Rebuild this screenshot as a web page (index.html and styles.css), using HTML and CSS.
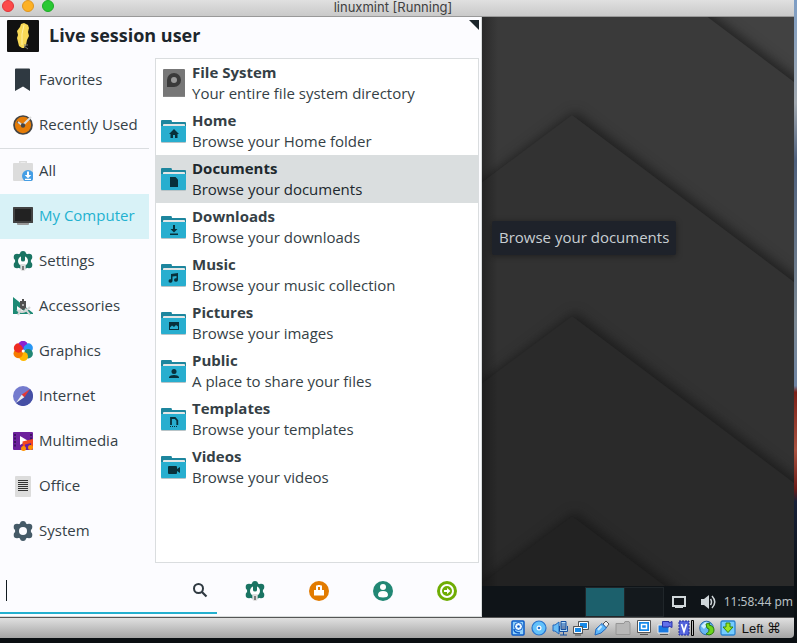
FILE: index.html
```html
<!DOCTYPE html>
<html lang="en">
<head>
<meta charset="utf-8">
<title>linuxmint [Running]</title>
<link rel="stylesheet" href="styles.css">
</head>
<body>
<svg class="defs" aria-hidden="true">
  <symbol id="folder" viewBox="0 0 25 23">
    <path fill="#b9c4c7" d="M0 21h25v1q0 1-1 1H1q-1 0-1-1z"/>
    <path fill="#1d869e" d="M1 0h9q1 0 1 2h13q1 0 1 1v6H0V1q0-1 1-1z"/>
    <path fill="#e4e6e6" d="M3 4h20q1 0 1 1v3H2V5q0-1 1-1z"/>
    <path fill="#28aecf" d="M0 6h25v15q0 1-1 1H1q-1 0-1-1z"/>
  </symbol>
  <symbol id="settings" viewBox="0 0 20 20">
    <g fill="#1a7463"><circle cx="10" cy="10" r="8"/><circle cx="10" cy="3" r="3"/><circle cx="4" cy="6" r="3.300"/><circle cx="16" cy="6" r="3.300"/><circle cx="4" cy="14" r="3.300"/><circle cx="16" cy="14" r="3.300"/></g>
    <circle cx="10" cy="10" r="5" fill="#fff"/>
    <path fill="#1a7463" d="M8 3h4v6q0 1.500-2 1.500T8 9z"/>
    <path fill="#dedede" d="M7.300 13h5.400v5q0 2-2.700 2t-2.700-2z"/>
    <path fill="#666" d="M9.200 15h1.600v4H9.200z"/>
  </symbol>
</svg>

<main class="window">
  <header class="titlebar">
    <div class="lights">
      <button class="light close" aria-label="Close"></button>
      <button class="light minimize" aria-label="Minimize"></button>
      <button class="light zoom" aria-label="Zoom"></button>
    </div>
    <h1>linuxmint [Running]</h1>
  </header>

  <div class="screen">
    <section class="menu">
      <header class="user">
        <svg class="avatar" viewBox="0 0 32 32"><rect width="32" height="32" rx="1" fill="#111"/><path fill="#f8d957" d="M17 3l2 1 2 1 1 3-1 4 1 4-2 4-1 5-2 3h-2l-3-2-1-4-1-4 1-3-1-4 3-4 1-3z"/><path fill="none" stroke="#fff0a5" d="M17 5q-3 8-2 20"/><path fill="none" stroke="#777" d="M17 26l4 3m-4-4l4 0"/></svg>
        <h2>Live session user</h2>
        <button class="grip" aria-label="Resize menu"></button>
      </header>

      <div class="columns">
        <nav class="categories" aria-label="Categories">
          <button class="category"><svg viewBox="0 0 20 24"><path fill="#2f3941" d="M3 .5h13q1 0 1 1V23l-7-4.500L2 23V1.500q0-1 1-1z"/></svg>Favorites</button>
          <button class="category"><svg viewBox="0 0 20 20"><circle cx="10" cy="10" r="9" fill="#e57c07" stroke="#444" stroke-width="1.700"/><path fill="none" stroke="#444" stroke-width="1.500" d="M4 7l6 3"/><path stroke="#ddd" stroke-width="2" d="M10 10l8-8M5 7l4 3"/><circle cx="10" cy="10.500" r="2.200" fill="#444"/></svg>Recently Used</button>
          <hr>
          <button class="category"><svg viewBox="0 0 20 20"><path fill="none" stroke="#dcdcdc" stroke-width="1.500" d="M6.800 3V.8h6.400V3"/><rect y="2" width="20" height="18" rx="1" fill="#dcdcdc"/><circle cx="15" cy="15" r="6" fill="#459ee5"/><path fill="#fff" d="M14 10.500h2V14h2.300L15 17.200 11.700 14H14zM12 17.700h6V19h-6z"/></svg>All</button>
          <button class="category active" aria-current="true"><svg viewBox="0 0 20 20"><path fill="#999" d="M4 17h12v1q0 1-1 1H5q-1 0-1-1z"/><rect y="1" width="20" height="16" rx=".5" fill="#424242"/><path fill="#222" d="M2 3h16v12H2z"/></svg>My Computer</button>
          <button class="category"><svg viewBox="0 0 20 20"><use href="#settings"/></svg>Settings</button>
          <button class="category"><svg viewBox="0 0 20 20"><path fill="#1d8a75" d="M0 1l20 16v1H0z"/><path fill="#fafafa" d="M4 10l7 5H4z"/><path fill="none" stroke="#d5d5d5" stroke-width="2" d="M9 11l-4 8m6-8l6 8M4 14q6 5 13-3"/><path fill="#505050" d="M9 3h2v2h2v7l-3 2-3-2V5h2z"/><circle cx="10" cy="9" r="1" fill="#ccc"/></svg>Accessories</button>
          <button class="category"><svg viewBox="0 0 20 20"><circle cx="10" cy="4.500" r="4.500" fill="#8b23cf"/><circle cx="15.200" cy="7" r="4.700" fill="#2796f5"/><circle cx="15.200" cy="12.800" r="4.700" fill="#218774"/><circle cx="10.500" cy="15.500" r="4.500" fill="#ffb800"/><circle cx="5.200" cy="12.500" r="4.700" fill="#f57c00"/><circle cx="5.500" cy="7" r="4.700" fill="#ee2c23"/><path fill="#8b23cf" d="M5.800 3Q7 0 10 0q3.500 0 4.300 3-4 2-4.300 5-1-4-4.200-5z"/><circle cx="10.200" cy="10" r="1.500" fill="#fff"/></svg>Graphics</button>
          <button class="category"><svg viewBox="0 0 20 20"><circle cx="10" cy="10" r="10" fill="#747bce"/><path fill="#454fa5" d="M17.100 2.900A10 10 0 0 1 2.900 17.100z"/><path fill="#e53935" d="M17 3L8.700 8.700l2.600 2.600z"/><path fill="#eee" d="M3 17l5.700-8.300 2.600 2.600z"/></svg>Internet</button>
          <button class="category"><svg viewBox="0 0 20 20"><rect y="1" width="20" height="18" rx="1" fill="#6d219c"/><path stroke="#3d1462" stroke-width="2" stroke-dasharray="2 1.500" d="M2 3v14M18 3v14"/><path fill="#fff" d="M7 5l7.500 4.500L7 14z"/><path fill="#f4471f" d="M9.500 10.500L20 8v9h-2v-5l-6 1.500V18H10z"/><circle cx="10.500" cy="17.500" r="2.500" fill="#ff9100"/><circle cx="17.500" cy="16.500" r="2.500" fill="#ff9100"/></svg>Multimedia</button>
          <button class="category"><svg viewBox="0 0 20 22"><rect x="2" y="1" width="16" height="21" rx="1" fill="#dcdcdc"/><path stroke="#333" stroke-width="1.200" d="M5 5.500h10M5 7.500h10M5 9.500h10M5 11.500h10M5 13.500h10M5 15.500h10"/></svg>Office</button>
          <button class="category"><svg viewBox="0 0 20 20"><g fill="#455a67"><circle cx="10" cy="10" r="8"/><circle cx="10" cy="3" r="3"/><circle cx="4" cy="6" r="3.300"/><circle cx="16" cy="6" r="3.300"/><circle cx="4" cy="14" r="3.300"/><circle cx="16" cy="14" r="3.300"/><circle cx="10" cy="17" r="3"/></g><circle cx="10" cy="10" r="4" fill="#fcfcff"/></svg>System</button>
        </nav>

        <div class="places">
          <button class="place"><svg viewBox="0 0 25 28"><rect x="2" width="22" height="28" rx="1" fill="#777"/><path fill="#888" d="M2 27h22v.5q0 .5-1 .5H3q-1 0-1-.5z"/><path fill="#3a3a3a" d="M6 18v-7a7 7 0 1 1 7 7z"/><circle cx="13" cy="11" r="3" fill="#999"/></svg><span><b>File System</b>Your entire file system directory</span></button>
          <button class="place"><svg viewBox="0 0 25 23"><use href="#folder"/><path fill="#08303a" d="M13 9l5 5h-1.500v4H14v-3h-2v3H9.500v-4H8z"/></svg><span><b>Home</b>Browse your Home folder</span></button>
          <button class="place selected"><svg viewBox="0 0 25 23"><use href="#folder"/><path fill="#08303a" d="M9 9h5.500l2.500 2.500V19H9z"/></svg><span><b>Documents</b>Browse your documents</span></button>
          <button class="place"><svg viewBox="0 0 25 23"><use href="#folder"/><path fill="#08303a" d="M12 9h2v4h2.500L13 16.500 9.500 13H12zM9 17.500h8V19H9z"/></svg><span><b>Downloads</b>Browse your downloads</span></button>
          <button class="place"><svg viewBox="0 0 25 23"><use href="#folder"/><path fill="#08303a" d="M10 10l7-1v7a2 1.700 0 1 1-1.500-1.700V12l-4 .6V17a2 1.700 0 1 1-1.500-1.700z"/></svg><span><b>Music</b>Browse your music collection</span></button>
          <button class="place"><svg viewBox="0 0 25 23"><use href="#folder"/><path fill="#08303a" fill-rule="evenodd" d="M8 10h10v8H8zM9 17h8v-2.500L15 13l-2 2-2-1.500-2 2z"/></svg><span><b>Pictures</b>Browse your images</span></button>
          <button class="place"><svg viewBox="0 0 25 23"><use href="#folder"/><circle cx="13" cy="11.500" r="2.500" fill="#08303a"/><path fill="#08303a" d="M8 18v-1q1-2 5-2t5 2v1z"/></svg><span><b>Public</b>A place to share your files</span></button>
          <button class="place"><svg viewBox="0 0 25 23"><use href="#folder"/><path fill="none" stroke="#08303a" stroke-width="1.800" d="M10 17v-7h4l2.300 2.500V17"/><path stroke="#08303a" stroke-dasharray="1 1" d="M9 18.500h8"/></svg><span><b>Templates</b>Browse your templates</span></button>
          <button class="place"><svg viewBox="0 0 25 23"><use href="#folder"/><path fill="#08303a" d="M8 10h7q1 0 1 1v2l3-2v6l-3-2v2q0 1-1 1H8q-1 0-1-1v-6q0-1 1-1z"/></svg><span><b>Videos</b>Browse your videos</span></button>
        </div>
      </div>

      <footer class="actions">
        <label class="search">
          <input type="text" aria-label="Search">
          <svg viewBox="0 0 16 16"><circle cx="6.500" cy="6.500" r="4.500" fill="none" stroke="#2f3941" stroke-width="2"/><path stroke="#2f3941" stroke-width="2.200" d="M10 10l4.500 4.500"/></svg>
        </label>
        <div class="session">
          <button aria-label="All settings"><svg viewBox="0 0 20 20"><use href="#settings"/></svg></button>
          <button aria-label="Lock screen"><svg viewBox="0 0 20 20"><circle cx="10" cy="10" r="10" fill="#e27b00"/><path fill="#fff" fill-rule="evenodd" d="M7 4.500h1L9 4h2l1 .5h1V9h2v5.500H5V9h2zM9 6v3h2V6z"/></svg></button>
          <button aria-label="Switch user"><svg viewBox="0 0 20 20"><circle cx="10" cy="10" r="10" fill="#218774"/><circle cx="10" cy="6" r="3" fill="#fff"/><path fill="#fff" d="M5 14q0-4 5-4t5 4q0 2.500-5 2.500T5 14z"/></svg></button>
          <button aria-label="Log out"><svg viewBox="0 0 20 20"><circle cx="10" cy="10" r="10" fill="#6fad04"/><circle cx="10" cy="10" r="6" fill="none" stroke="#fff" stroke-width="2"/><path fill="#fff" d="M7 9h3V7l3.500 3-3.500 3v-2H7z"/></svg></button>
        </div>
      </footer>
    </section>

    <section class="desktop">
      <div class="wallpaper">
        <svg viewBox="0 0 312 569" preserveAspectRatio="xMinYMin slice" aria-hidden="true">
          <defs><filter id="shade" x="-20%" y="-20%" width="140%" height="140%" color-interpolation-filters="sRGB"><feDropShadow dx="3" dy="-3" stdDeviation="6" flood-color="#111" flood-opacity=".65"/></filter></defs>
          <path fill="#424242" d="M0 0h312v569H0z"/>
          <path filter="url(#shade)" fill="#3a3a3a" d="M90-102L690 349v400H-210V122z"/>
          <path filter="url(#shade)" fill="#323232" d="M90 98L690 549v300H-210V322z"/>
          <path filter="url(#shade)" fill="#2a2a2a" d="M90 299L690 750v200H-210V523z"/>
          <path filter="url(#shade)" fill="#222" d="M90 499L690 950H-210V723z"/>
        </svg>
        <div class="tooltip" role="tooltip">Browse your documents</div>
      </div>
      <footer class="taskbar">
        <div class="pager"><button class="current" aria-label="Workspace 1"></button><button aria-label="Workspace 2"></button></div>
        <svg viewBox="0 0 16 16" aria-hidden="true"><path fill="none" stroke="#d0d7da" stroke-width="2" d="M2 3h12v9H2z"/><path fill="#d0d7da" d="M4 12h8v2H4z"/></svg>
        <svg viewBox="0 0 16 16" aria-hidden="true"><path fill="#d0d7da" d="M1 5h3l5-4v14l-5-4H1z"/><path fill="none" stroke="#d0d7da" stroke-width="1.500" d="M10.500 5q2 3 0 6M12 2q5.500 6 0 12"/></svg>
        <time>11:58:44 pm</time>
      </footer>
    </section>
  </div>

  <footer class="status">
    <svg viewBox="0 0 16 16"><rect x="2" y="1" width="12" height="14" rx="1" fill="#8fd0fa" stroke="#0959c8" stroke-width="1.500"/><circle cx="8.500" cy="6.500" r="4" fill="#e8f6ff" stroke="#0959c8"/><circle cx="8.500" cy="6.500" r="1.300" fill="#0959c8"/><path fill="none" stroke="#0959c8" stroke-width="1.500" d="M4 9q0 4 6 4"/></svg>
    <svg viewBox="0 0 16 16"><circle cx="8" cy="8" r="7" fill="#62c1fa" stroke="#2874ce" stroke-width="1.200"/><circle cx="8" cy="8" r="2.500" fill="#fff"/><circle cx="8" cy="8" r="1.300" fill="#2874ce"/></svg>
    <svg viewBox="0 0 16 16"><path fill="#69bdf5" stroke="#2567ba" d="M1 5h2l4-3v12l-4-3H1z"/><path fill="#b9e0fa" stroke="#1650a0" d="M9 1.500h5v8H9zM7.500 6v5.500h8V6M11.500 12v3M8 15h7"/><path stroke="#1650a0" d="M9 4h5M9 6h5M9 8h5"/></svg>
    <svg viewBox="0 0 16 16"><path fill="#1689e9" stroke="#555" d="M5.500 1.500h10v8h-10z"/><path fill="none" stroke="#fff" d="M6.500 2.500h8v6h-8z"/><path fill="#1689e9" stroke="#555" d="M.5 6.500h9v7h-9z"/><path fill="none" stroke="#fff" d="M1.500 7.500h7v5h-7z"/><path stroke="#555" d="M2 15h6"/></svg>
    <svg viewBox="0 0 16 16"><path fill="#eee" stroke="#555" d="M9 4l3-3 3 3-3 4z"/><path fill="#5cb6fa" stroke="#2167bd" d="M8 3.500l4.500 4.500L7 13l-6 2 1-6z"/><path stroke="#c8eaff" stroke-width="2" d="M7.500 6L4 10"/></svg>
    <svg viewBox="0 0 16 16"><path fill="#b7b7b7" stroke="#969696" d="M1 3.500h8l1-2h4l1 2v11H1z"/></svg>
    <svg viewBox="0 0 16 16"><path fill="#fff" stroke="#555" d="M1.500.5h13v12h-13z"/><path fill="#1689e9" d="M3 2h10v9H3z"/><path fill="#1689e9" stroke="#fff" stroke-width="1.500" d="M5.500 4.500h5v4h-5z"/><path fill="#ddd" stroke="#555" d="M4 14.500h8"/></svg>
    <svg viewBox="0 0 16 16"><path fill="#1879e2" stroke="#eee" d="M1 5h11v8H1z"/><path fill="#555" d="M3 14h8v1H3z"/><path fill="#6270ea" stroke="#2930a5" d="M5.500 1.500H12V3l3-1.500v6L12 6v1H5.500z"/></svg>
    <svg viewBox="0 0 16 16"><rect x="1" y="1" width="10" height="14" fill="#5363db" stroke="#252e9c" stroke-dasharray="2 1"/><path fill="none" stroke="#fff" stroke-width="1.700" d="M3.500 4L6 11.500 8.500 4"/><path fill="#bbb" stroke="#000" d="M13.500.5h2v15h-2z"/></svg>
    <svg viewBox="0 0 16 16"><circle cx="7.500" cy="8" r="6.800" fill="#68b7f4" stroke="#2b69ad"/><path fill="#d0efff" d="M2 6l4-4 4 1-5 6z"/><path fill="#6bd51e" stroke="#27790c" d="M7 4l4-1-1 2q5 1 5 5t-5 5l-3-1q4-2 3-5L8 8z"/></svg>
    <svg viewBox="0 0 16 16"><rect x="1" y="1" width="14" height="14" rx="1.500" fill="#74ccff" stroke="#2a82ce" stroke-width="1.300"/><path fill="#9ee522" stroke="#348810" d="M6 3h4v4h3l-5 5.500L3 7h3z"/></svg>
    <span>Left <kbd>⌘</kbd></span>
  </footer>
</main>
</body>
</html>
```
FILE: styles.css
```css
* {
  box-sizing: border-box;
}

body {
  margin: 0;
  min-height: 100vh;
  display: flex;
  padding: 0 3px 5px 0;
  font: 15px/21px "Open Sans", "Noto Sans", sans-serif;
  color: #353f46;
  background:
    linear-gradient(#0a0f12, #0a0f12) bottom / 100% 5px no-repeat,
    linear-gradient(#7d9dc4 0%, #a2a9b0 16%, #4d5f7c 25%, #7c8994 50%, #6e84a4 60%, #7b2018 61%, #a85240 70%, #6d1d18 76%, #182138 78%, #0b1014 90%);
}

h1, h2 {
  margin: 0;
}

button {
  margin: 0;
  padding: 0;
  border: 0;
  background: none;
  font: inherit;
  color: inherit;
  text-align: left;
}

svg {
  display: block;
  flex: none;
}

.defs {
  position: absolute;
  width: 0;
  height: 0;
}

.window {
  flex: 1;
  min-width: 0;
  display: flex;
  flex-direction: column;
}

.titlebar {
  display: grid;
  grid-template-columns: 1fr auto 1fr;
  padding: 0 10px 2px 2px;
  border-bottom: 1px solid #999;
  background: linear-gradient(#e0e0e0, #c9c9c9);
}

.titlebar h1 {
  font: 400 13px/14px Inter, sans-serif;
  color: #404040;
}

.lights {
  display: flex;
  gap: 8px;
}

.light {
  width: 12px;
  height: 12px;
  border-radius: 50%;
}

.close {
  background: #fc4a4a;
  border: 1px solid #e0343a;
}

.minimize {
  background: #fdb124;
  border: 1px solid #df9420;
}

.zoom {
  background: #2ac833;
  border: 1px solid #1dab27;
}

.screen {
  flex: 1;
  display: grid;
  grid-template-columns: 482px 1fr;
}

.menu {
  display: flex;
  flex-direction: column;
  background: #fcfcff;
  border-right: 1px solid #d8dcdc;
  border-bottom: 1px solid #d8dcdc;
}

.user {
  display: flex;
  gap: 10px;
  padding: 3px 2px 6px 7px;
}

.avatar {
  width: 32px;
  height: 32px;
}

.user h2 {
  flex: 1;
  font-size: 18px;
  line-height: 30px;
  color: #1d262c;
}

.grip {
  width: 10px;
  height: 10px;
  background: #1b252b;
  clip-path: polygon(0 0, 100% 0, 100% 100%);
}

.columns {
  flex: 1;
  display: grid;
  grid-template-columns: 149px 1fr;
  gap: 6px;
  padding-right: 2px;
}

.categories hr {
  margin: 0;
  border: 0;
  border-top: 1px solid #dadde0;
}

.category {
  display: flex;
  align-items: center;
  gap: 6px;
  width: 100%;
  height: 45px;
  padding: 0 0 2px 13px;
}

.category svg {
  width: 20px;
}

.category.active {
  background: #d8f2f7;
  color: #22b1d0;
}

.places {
  border: 1px solid #dadddf;
  background: #fff;
}

.place {
  display: flex;
  align-items: center;
  gap: 6px;
  width: 100%;
  padding: 3px 5px;
}

.place svg {
  width: 25px;
}

.place b {
  display: block;
}

.place.selected {
  background: #dadedf;
  color: #20282d;
}

.actions {
  display: flex;
  padding-bottom: 2px;
}

.search {
  display: flex;
  align-items: center;
  width: 217px;
  height: 51px;
  padding: 5px 9px 0 6px;
  border-bottom: 2px solid #24b0cf;
}

.search::before {
  content: "";
  width: 1px;
  height: 21px;
  background: #111a20;
}

.search input {
  flex: 1;
  min-width: 0;
  border: 0;
  outline: 0;
  background: none;
  font: inherit;
}

.search svg {
  width: 16px;
}

.session {
  flex: 1;
  display: flex;
  align-items: center;
  gap: 44px;
  padding: 4px 0 0 28px;
}

.session svg {
  width: 20px;
}

.desktop {
  display: flex;
  flex-direction: column;
  min-width: 0;
}

.wallpaper {
  position: relative;
  flex: 1;
  overflow: hidden;
}

.wallpaper svg {
  position: absolute;
  width: 100%;
  height: 100%;
}

.wallpaper::after {
  content: "";
  position: absolute;
  inset: 0;
  background: linear-gradient(90deg, rgba(0, 0, 0, .28), transparent 16px);
}

.tooltip {
  position: absolute;
  z-index: 1;
  top: 204px;
  left: 10px;
  padding: 6px 7px 7px;
  border-radius: 2px;
  background: #1e222a;
  color: #c8ced2;
  box-shadow: 0 1px 6px rgba(0, 0, 0, .4);
}

.taskbar {
  display: flex;
  align-items: center;
  justify-content: flex-end;
  height: 31px;
  background: #0f1418;
}

.taskbar svg {
  width: 16px;
  margin-left: 7px;
}

.taskbar svg + svg {
  margin-left: 13px;
}

.taskbar time {
  margin: 0 1px 0 8px;
  font: 12px/21px "Noto Sans", sans-serif;
  color: #b9c0c4;
}

.pager {
  display: flex;
  gap: 1px;
  padding: 1px;
  background: #20262a;
}

.pager button {
  width: 38px;
  height: 28px;
  background: #14191d;
}

.pager .current {
  background: #1c606c;
}

.status {
  display: flex;
  align-items: center;
  justify-content: flex-end;
  gap: 5px;
  height: 21px;
  padding-right: 13px;
  border-top: 1px solid #555;
  border-radius: 0 0 4px 0;
  background: linear-gradient(#e0e0e0, #a4a4a4);
}

.status svg {
  width: 16px;
}

.status span {
  padding-left: 1px;
  font: 13px/18px "Liberation Sans", sans-serif;
  color: #111;
}

.status kbd {
  font: 14px/18px "DejaVu Sans", sans-serif;
}
```
